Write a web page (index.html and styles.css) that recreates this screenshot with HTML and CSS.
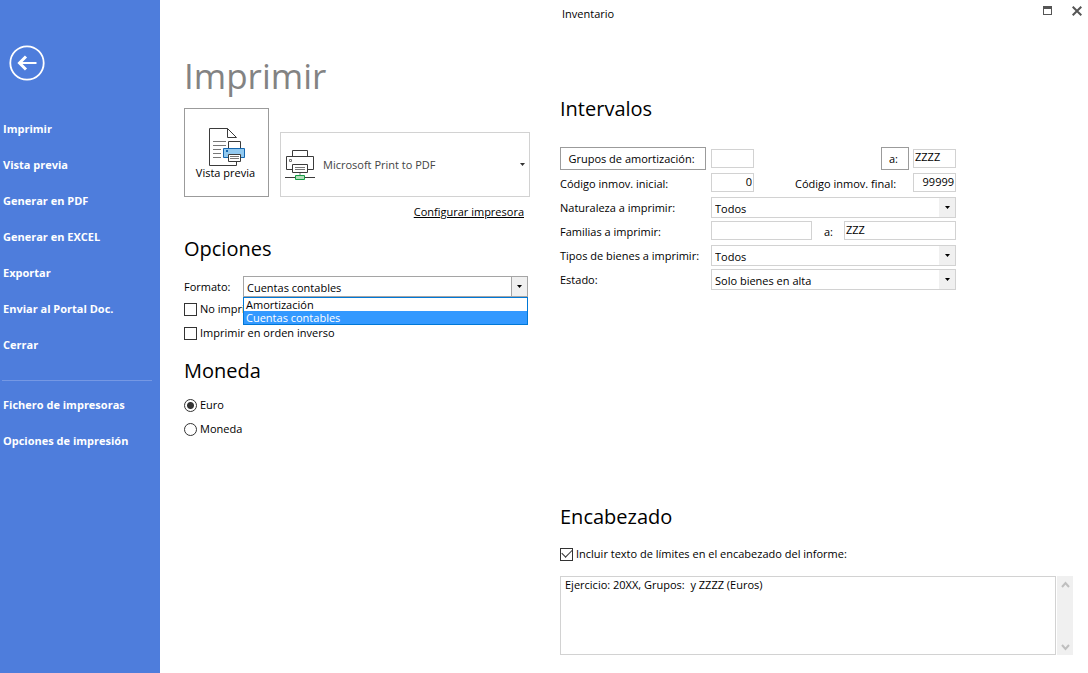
FILE: index.html
```html
<!DOCTYPE html>
<html lang="es">
<head>
<meta charset="utf-8">
<meta name="viewport" content="width=device-width, initial-scale=1">
<title>Inventario</title>
<link rel="stylesheet" href="styles.css">
</head>
<body>
<div class="app">
  <nav class="sidebar">
    <button class="back" type="button" aria-label="Volver">
      <svg width="36" height="36" viewBox="0 0 36 36" fill="none" stroke="#fff"><circle cx="18" cy="18" r="16.7" stroke-width="1.8"/><path d="M27.500 18H10.500" stroke-width="2"/><path d="M17 11.500L10.500 18l6.500 6.500" stroke-width="3"/></svg>
    </button>
    <a class="nav-link" href="#">Imprimir</a>
    <a class="nav-link" href="#">Vista previa</a>
    <a class="nav-link" href="#">Generar en PDF</a>
    <a class="nav-link" href="#">Generar en EXCEL</a>
    <a class="nav-link" href="#">Exportar</a>
    <a class="nav-link" href="#">Enviar al Portal Doc.</a>
    <a class="nav-link" href="#">Cerrar</a>
    <hr class="nav-line">
    <a class="nav-link" href="#">Fichero de impresoras</a>
    <a class="nav-link" href="#">Opciones de impresión</a>
  </nav>

  <main class="main">
    <header class="titlebar">
      <span class="window-title">Inventario</span>
      <div class="window-buttons">
        <button class="window-button" type="button" aria-label="Maximizar"><svg width="10" height="10" viewBox="0 0 10 10"><path d="M0 0h9v9H0zM1 3v5h7V3z" fill="#555" fill-rule="evenodd"/></svg></button>
        <button class="window-button" type="button" aria-label="Cerrar ventana"><svg width="10" height="10" viewBox="0 0 10 10" fill="none" stroke="#555" stroke-width="2"><path d="M.7.700l8.600 8.600M9.300.700L.7 9.300"/></svg></button>
      </div>
    </header>

    <section class="column">
      <h1 class="page-title">Imprimir</h1>
      <div class="print-row">
        <button class="preview" type="button">
          <svg width="36" height="40" viewBox="1 0 36 40" fill="none" stroke="#3b3b3b" stroke-width="1">
            <path d="M27.500 10.500V9.500L19.500 1.500H1.500V38.500H28.500V34" fill="#fff"/>
            <path d="M19.500 1.500V10.500H28.500Z" fill="#fff"/>
            <path d="M5 14.500H18M5 18.500H18M5 22.500H13M5 26.500H13M5 30.500H13" stroke="#777"/>
            <path d="M20.500 21V14.500H32.500V21" fill="#fff"/>
            <path d="M15.500 21.500H36.500V30.500H15.500Z" fill="#91c9f0" stroke="#1667b0"/>
            <path d="M18 23h2v2h-2z" fill="#1667b0" stroke="none"/>
            <path d="M20.500 27.500H32.500V34.500H20.500Z" fill="#fff"/>
            <path d="M22 29.500H31M22 31.500H31" stroke="#777"/>
          </svg>
          <span>Vista previa</span>
        </button>
        <button class="printer" type="button">
          <svg width="30" height="32" viewBox="0 0 30 32" fill="none" stroke="#3b3b3b">
            <path d="M7.500 7V1.500H22.500V7"/>
            <path d="M7 20.500H1.500V7.500H28.500V20.500H23"/>
            <path d="M7.500 15.500H22.500V23.500H7.500Z" fill="#fff"/>
            <path d="M10 18.500H20M10 20.500H20M4.500 10.500h2v2h-2z" stroke="#777"/>
            <path d="M15 24v3" stroke="#bbb" stroke-width="2"/>
            <path d="M0 28.500H30"/>
            <path d="M10.500 26.500H19.500V30.500H10.500Z" fill="#b5dfbb" stroke="#159c45"/>
          </svg>
          <span class="printer-name">Microsoft Print to PDF</span>
          <svg width="5" height="3" viewBox="0 0 5 3"><path d="M0 0h5L2.500 3z" fill="#333"/></svg>
        </button>
      </div>
      <a class="configure" href="#">Configurar impresora</a>

      <h2 class="heading heading-opciones">Opciones</h2>
      <div class="format-row">
        <label for="formato">Formato:</label>
        <div class="select select-open">
          <select id="formato"><option>Cuentas contables</option></select>
          <span class="select-arrow"><svg width="5" height="3" viewBox="0 0 5 3"><path d="M0 0h5L2.500 3z" fill="#000"/></svg></span>
          <ul class="menu" role="listbox" aria-label="Formato">
            <li class="menu-item" role="option">Amortización</li>
            <li class="menu-item menu-item-active" role="option" aria-selected="true">Cuentas contables</li>
          </ul>
        </div>
      </div>
      <label class="choice"><input type="checkbox"><span>No impri</span></label>
      <label class="choice"><input type="checkbox"><span>Imprimir en orden inverso</span></label>

      <h2 class="heading heading-moneda">Moneda</h2>
      <label class="choice"><input type="radio" name="moneda" checked><span>Euro</span></label>
      <label class="choice"><input type="radio" name="moneda"><span>Moneda</span></label>
    </section>

    <section class="column column-right">
      <h2 class="heading heading-intervalos">Intervalos</h2>
      <div class="ranges">
        <div class="range-row range-row-groups">
          <div class="range-label"><button class="range-button range-button-wide" type="button">Grupos de amortización:</button></div>
          <input class="field field-short" type="text" aria-label="Grupo inicial">
          <button class="range-button range-button-to" type="button">a:</button>
          <input class="field field-short" type="text" aria-label="Grupo final" value="ZZZZ">
        </div>
        <div class="range-row">
          <label class="range-label" for="cod-ini">Código inmov. inicial:</label>
          <input class="field field-short field-number" id="cod-ini" type="text" value="0">
          <label class="final-label" for="cod-fin">Código inmov. final:</label>
          <input class="field field-short field-number" id="cod-fin" type="text" value="99999">
        </div>
        <div class="range-row">
          <label class="range-label" for="naturaleza">Naturaleza a imprimir:</label>
          <div class="select"><select id="naturaleza"><option>Todos</option></select><span class="select-arrow"><svg width="5" height="3" viewBox="0 0 5 3"><path d="M0 0h5L2.500 3z" fill="#000"/></svg></span></div>
        </div>
        <div class="range-row">
          <label class="range-label" for="fam-ini">Familias a imprimir:</label>
          <input class="field field-family" id="fam-ini" type="text">
          <label class="to-label" for="fam-fin">a:</label>
          <input class="field field-grow" id="fam-fin" type="text" value="ZZZ">
        </div>
        <div class="range-row">
          <label class="range-label" for="tipos">Tipos de bienes a imprimir:</label>
          <div class="select"><select id="tipos"><option>Todos</option></select><span class="select-arrow"><svg width="5" height="3" viewBox="0 0 5 3"><path d="M0 0h5L2.500 3z" fill="#000"/></svg></span></div>
        </div>
        <div class="range-row">
          <label class="range-label" for="estado">Estado:</label>
          <div class="select"><select id="estado"><option>Solo bienes en alta</option></select><span class="select-arrow"><svg width="5" height="3" viewBox="0 0 5 3"><path d="M0 0h5L2.500 3z" fill="#000"/></svg></span></div>
        </div>
      </div>

      <div class="header-text">
        <h2 class="heading heading-encabezado">Encabezado</h2>
        <label class="choice"><input type="checkbox" checked><span>Incluir texto de límites en el encabezado del informe:</span></label>
        <div class="memo">
          <textarea class="memo-text" aria-label="Encabezado">Ejercicio: 20XX, Grupos:  y ZZZZ (Euros)</textarea>
          <div class="memo-scroll">
            <button class="scroll-button" type="button" aria-label="Subir"><svg width="9" height="8" viewBox="0 0 9 8" fill="none" stroke="#bfbfbf" stroke-width="2"><path d="M1 6l3.500-4L8 6"/></svg></button>
            <button class="scroll-button" type="button" aria-label="Bajar"><svg width="9" height="8" viewBox="0 0 9 8" fill="none" stroke="#bfbfbf" stroke-width="2"><path d="M1 2l3.500 4L8 2"/></svg></button>
          </div>
        </div>
      </div>
    </section>
  </main>
</div>
</body>
</html>
```

FILE: styles.css
```css
* {
  box-sizing: border-box;
}

body {
  margin: 0;
  background: #fff;
  color: #000;
  font: 11px/16px "Open Sans", "Noto Sans", sans-serif;
}

button,
input,
select,
textarea {
  margin: 0;
  font: inherit;
  color: inherit;
  border-radius: 0;
}

svg {
  display: block;
  flex: none;
}

.app {
  display: grid;
  grid-template-columns: 160px minmax(0, 1fr);
  min-height: 100vh;
}

/* Sidebar */
.sidebar {
  display: flex;
  flex-direction: column;
  padding-top: 45px;
  background: #4e7ddc;
}

.back {
  width: 36px;
  height: 36px;
  margin: 0 0 30px 9px;
  padding: 0;
  border: 0;
  background: none;
}

.nav-link {
  padding-left: 3px;
  color: #fff;
  font-weight: 700;
  line-height: 36px;
  text-decoration: none;
}

.nav-line {
  width: 150px;
  margin: 17px 0 6px 2px;
  border: 0;
  border-top: 1px solid #7598e4;
}

/* Main area */
.main {
  display: grid;
  grid-template-columns: minmax(0, 346fr) minmax(0, 513fr);
  grid-template-rows: 28px 1fr;
  column-gap: 30px;
  padding: 0 15px 0 24px;
}

.titlebar {
  grid-column: 2;
  display: flex;
  justify-content: space-between;
  padding-left: 2px;
}

.window-title {
  line-height: 28px;
}

.window-buttons {
  display: flex;
  gap: 19px;
  padding-top: 6px;
  margin-right: -9px;
}

.window-button {
  height: 10px;
  padding: 0;
  border: 0;
  background: none;
}

.column {
  display: flex;
  flex-direction: column;
  grid-row: 2;
}

.column-right {
  grid-column: 2;
  padding-bottom: 18px;
}

.page-title {
  margin: 24px 0 8px;
  color: #838383;
  font-size: 35px;
  font-weight: 400;
  line-height: 48px;
}

.heading {
  margin: 0;
  font-size: 20px;
  font-weight: 400;
  line-height: 32px;
}

.heading-opciones {
  margin: 12px 0 11px;
}

.heading-moneda {
  margin: 10px 0 6px;
}

/* Printer selection */
.print-row {
  display: flex;
  align-items: flex-end;
  gap: 11px;
}

.preview {
  display: flex;
  flex-direction: column;
  align-items: center;
  width: 85px;
  height: 89px;
  padding: 18px 2px 0 0;
  border: 1px solid #9b9b9b;
  background: #fff;
  line-height: 12px;
}

.preview svg {
  margin-left: 2px;
}

.printer {
  display: flex;
  flex: 1;
  align-items: center;
  height: 65px;
  padding: 0 4px;
  border: 1px solid #d2d2d2;
  background: #fff;
}

.printer-name {
  flex: 1;
  padding-left: 8px;
  color: #444;
  text-align: left;
}

.configure {
  align-self: flex-end;
  margin: 6px 6px 0 0;
  color: #000;
  line-height: 18px;
}

/* Options */
.format-row {
  display: grid;
  grid-template-columns: 59px minmax(0, 1fr);
  padding-right: 2px;
  line-height: 21px;
}

.select {
  position: relative;
  flex: 1;
  height: 21px;
}

.select select {
  width: 100%;
  height: 100%;
  padding: 0 18px 2px 3px;
  border: 1px solid #d2d2d2;
  background: #fff;
  appearance: none;
}

.select-arrow {
  position: absolute;
  top: 1px;
  right: 1px;
  bottom: 1px;
  display: grid;
  place-items: center;
  width: 16px;
  background: #f0f0f0;
  pointer-events: none;
}

.select-open select {
  border-color: #a5a5a5;
}

.select-open .select-arrow {
  border-left: 1px solid #a5a5a5;
}

.menu {
  position: absolute;
  z-index: 1;
  top: 21px;
  left: 0;
  right: 0;
  margin: 0;
  padding: 0;
  border: 1px solid #0078d7;
  background: #fff;
  list-style: none;
}

.menu-item {
  padding-left: 2px;
  line-height: 13px;
}

.menu-item-active {
  background: #3399ff;
  color: #fff;
}

.choice {
  display: flex;
  align-items: center;
  gap: 3px;
  height: 24px;
}

.choice input {
  width: 13px;
  height: 13px;
  border: 1px solid #333;
  background: #fff;
  appearance: none;
}

.choice input[type="radio"] {
  border-radius: 50%;
}

.choice input[type="radio"]:checked {
  background: radial-gradient(circle, #333 3px, #fff 4px);
}

.choice input[type="checkbox"]:checked {
  display: grid;
  place-items: center;
}

.choice input[type="checkbox"]:checked::before {
  content: "";
  width: 9px;
  height: 5px;
  margin-bottom: 4px;
  border: solid #333;
  border-width: 0 0 1px 1px;
  transform: rotate(-45deg);
}

/* Ranges */
.heading-intervalos {
  margin: 65px 0 21px;
}

.ranges {
  max-width: 396px;
}

.range-row {
  display: flex;
  align-items: flex-start;
  height: 24px;
  padding-top: 1px;
  line-height: 22px;
}

.range-row-groups {
  align-items: center;
  height: 26px;
  padding: 0 0 2px;
}

.range-label {
  flex: none;
  width: 151px;
}

.range-button {
  height: 23px;
  padding: 0 3px 0 0;
  border: 1px solid #9b9b9b;
  background: #fff;
}

.range-button-wide {
  display: block;
  width: 146px;
}

.range-button-to {
  width: 28px;
  margin: 0 4px 0 auto;
}

.field {
  height: 19px;
  padding: 0 1px 2px;
  border: 1px solid #d2d2d2;
  background: #fff;
}

.field-short {
  width: 43px;
}

.field-number {
  text-align: right;
}

.field-family {
  width: 101px;
}

.field-grow {
  flex: 1;
  min-width: 0;
}

.final-label {
  width: 118px;
  margin-left: auto;
}

.to-label {
  width: 20px;
  margin-left: 12px;
}

/* Header text */
.header-text {
  margin-top: auto;
}

.heading-encabezado {
  margin: 24px 0 9px;
}

.memo {
  display: flex;
  gap: 1px;
  height: 79px;
  margin-top: 10px;
}

.memo-text {
  flex: 1;
  padding: 0 4px;
  border: 1px solid #d2d2d2;
  outline: 0;
  resize: none;
}

.memo-scroll {
  display: flex;
  flex-direction: column;
  justify-content: space-between;
  width: 16px;
  background: #f0f0f0;
}

.scroll-button {
  display: grid;
  place-items: center;
  height: 17px;
  padding: 0;
  border: 0;
  background: none;
}
```
